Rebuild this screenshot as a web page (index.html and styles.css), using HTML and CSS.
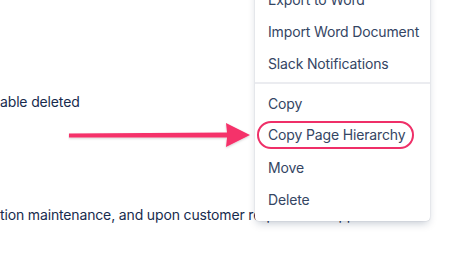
FILE: index.html
```html
<!DOCTYPE html>
<html>
<head>
<meta charset="utf-8">
<link rel="stylesheet" href="styles.css">
</head>
<body>
<div class="page">
  <p class="line line-first">able deleted</p>
  <p class="line line-second">tion maintenance, and upon customer request for support</p>

  <div class="menu">
    <div class="group">
      <div class="item">Export to Word</div>
      <div class="item">Import Word Document</div>
      <div class="item">Slack Notifications</div>
    </div>
    <div class="group">
      <div class="item">Copy</div>
      <div class="item"><span class="highlight">Copy Page Hierarchy</span></div>
      <div class="item">Move</div>
      <div class="item">Delete</div>
    </div>
  </div>

  <svg class="arrow" width="190" height="30" viewBox="0 0 190 30">
    <defs>
      <filter id="sh" x="-10%" y="-50%" width="120%" height="200%">
        <feDropShadow dx="0" dy="1" stdDeviation="1" flood-color="#000" flood-opacity="0.18"/>
      </filter>
    </defs>
    <polygon filter="url(#sh)" fill="#f5316b" points="1,10.6 159,9.4 158,0 182,12 158,24 159,14.6 1,14.4"/>
  </svg>
</div>
</body>
</html>
```
FILE: styles.css
```css
html, body {
  margin: 0;
  padding: 0;
  background: #ffffff;
}
.page {
  position: relative;
  width: 456px;
  height: 259px;
  overflow: hidden;
  font-family: "Inter", "Noto Sans", sans-serif;
  font-size: 14px;
  letter-spacing: -0.15px;
  color: #172b4d;
}
.line {
  margin: 0;
  line-height: 20px;
  white-space: nowrap;
}
.line-first {
  padding-top: 92px;
}
.line-second {
  padding-top: 93px;
}
.menu {
  position: absolute;
  left: 255px;
  top: -21px;
  width: 175px;
  background: #ffffff;
  border-radius: 4px;
  box-shadow: 0 4px 8px -2px rgba(9, 30, 66, 0.25), 0 0 1px rgba(9, 30, 66, 0.31);
  padding: 4px 0 6px;
}
.group + .group {
  border-top: 2px solid #ebecf0;
  margin-top: 3px;
  padding-top: 3px;
}
.item {
  height: 32px;
  display: flex;
  align-items: center;
  padding: 0 13px;
  color: #344563;
  white-space: nowrap;
}
.highlight {
  margin-left: -11px;
  padding: 0 7px 0 9px;
  height: 24px;
  line-height: 24px;
  border: 2.5px solid #ef2f68;
  border-radius: 16px;
}
.arrow {
  position: absolute;
  left: 68px;
  top: 123px;
}
```
